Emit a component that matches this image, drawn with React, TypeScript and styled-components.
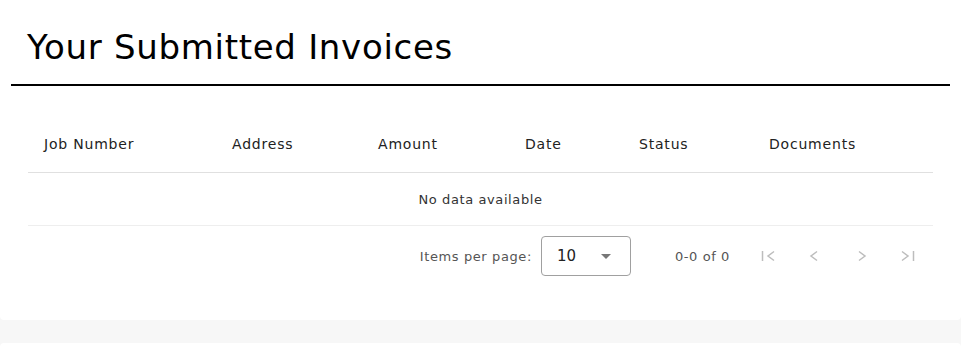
import React from "react";
import styled, { createGlobalStyle } from "styled-components";

const GlobalStyle = createGlobalStyle`
  html, body {
    margin: 0;
    padding: 0;
    background: #f7f7f7;
    font-family: "DejaVu Sans", "Open Sans", sans-serif;
  }
`;

const columns = ["Job Number", "Address", "Amount", "Date", "Status", "Documents"];
const colWidths = "204px 146px 147px 114px 130px 1fr";

const Card = styled.section`
  background: #fff;
  border-radius: 0 0 4px 4px;
  padding: 26px 0 0;
  height: 294px;
`;

const NextCard = styled.div`
  background: #fff;
  border-radius: 4px 4px 0 0;
  margin-top: 23px;
  height: 9px;
`;

const TitleBar = styled.div`
  margin: 0 11px;
  padding: 0 0 15px 16px;
  border-bottom: 2px solid #000;
`;

const Title = styled.h1`
  margin: 0;
  font-size: 34px;
  line-height: 43px;
  font-weight: 400;
  color: #000;
  letter-spacing: 0.7px;
`;

const Table = styled.div`
  margin: 30px 28px 0;
`;

const HeaderRow = styled.div`
  display: grid;
  grid-template-columns: ${colWidths};
  height: 56px;
  align-items: center;
  border-bottom: 1px solid #e0e0e0;
`;

const HeaderCell = styled.div<{ $first?: boolean }>`
  padding-left: ${(p) => (p.$first ? "16px" : "0")};
  font-size: 14px;
  letter-spacing: 0.8px;
  color: #222;
  white-space: nowrap;
`;

const EmptyRow = styled.div`
  height: 52px;
  display: flex;
  align-items: center;
  justify-content: center;
  border-bottom: 1px solid #eeeeee;
  font-size: 13px;
  letter-spacing: 0.6px;
  color: #333;
`;

const Paginator = styled.div`
  display: flex;
  align-items: center;
  justify-content: flex-end;
  height: 60px;
  padding-right: 3px;
  font-size: 13px;
  letter-spacing: 0.6px;
  color: #555;
`;

const PageSizeLabel = styled.span`
  margin-right: 9px;
`;

const Select = styled.div`
  box-sizing: border-box;
  width: 90px;
  height: 40px;
  border: 1px solid #a0a0a0;
  border-radius: 4px;
  display: flex;
  align-items: center;
  justify-content: space-between;
  padding: 0 19px 0 15px;
  font-size: 15px;
  letter-spacing: 0;
  color: #222;
`;

const Caret = styled.span`
  width: 0;
  height: 0;
  border-left: 5px solid transparent;
  border-right: 5px solid transparent;
  border-top: 5px solid #777;
`;

const RangeLabel = styled.span`
  margin: 0 16px 0 44px;
`;

const NavButton = styled.button`
  width: 46px;
  height: 40px;
  border: none;
  background: transparent;
  padding: 0;
  display: flex;
  align-items: center;
  justify-content: center;
  color: #bdbdbd;
  cursor: default;
`;

const icons: Record<string, React.ReactNode> = {
  first: (
    <>
      <path d="M1.5 1v10" />
      <path d="M13 1.5 7 6l6 4.5" />
    </>
  ),
  prev: <path d="M10 1.5 4 6l6 4.5" />,
  next: <path d="M6 1.5 12 6l-6 4.5" />,
  last: (
    <>
      <path d="M3 1.5 9 6l-6 4.5" />
      <path d="M14.5 1v10" />
    </>
  ),
};

const NavIcon = ({ name }: { name: string }) => (
  <svg width="16" height="12" viewBox="0 0 16 12" fill="none" stroke="currentColor" strokeWidth="1.5">
    {icons[name]}
  </svg>
);

export default function App() {
  return (
    <>
      <GlobalStyle />
      <Card>
        <TitleBar>
          <Title>Your Submitted Invoices</Title>
        </TitleBar>
        <Table>
          <HeaderRow>
            {columns.map((c, i) => (
              <HeaderCell key={c} $first={i === 0}>
                {c}
              </HeaderCell>
            ))}
          </HeaderRow>
          <EmptyRow>No data available</EmptyRow>
          <Paginator>
            <PageSizeLabel>Items per page:</PageSizeLabel>
            <Select>
              <span>10</span>
              <Caret />
            </Select>
            <RangeLabel>0-0 of 0</RangeLabel>
            {["first", "prev", "next", "last"].map((n) => (
              <NavButton key={n} disabled>
                <NavIcon name={n} />
              </NavButton>
            ))}
          </Paginator>
        </Table>
      </Card>
      <NextCard />
    </>
  );
}
